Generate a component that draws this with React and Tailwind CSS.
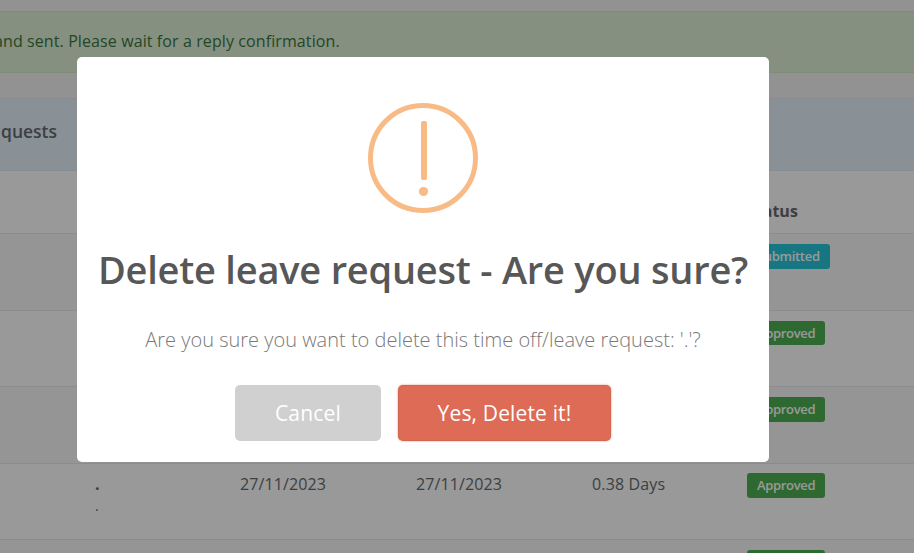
const requests = [
  { status: "Submitted", height: "h-[77px]", bg: "bg-[#f9f9f9]", badge: "mt-[1px] h-[25px] bg-[#26c6da] tracking-[-0.3px]" },
  { status: "Approved", height: "h-[76px]", bg: "bg-white", badge: "mt-[1px] h-[24px] bg-[#4caf50] tracking-[-0.33px]" },
  { status: "Approved", height: "h-[77px]", bg: "bg-[#f9f9f9]", badge: "mt-[1px] h-[25px] bg-[#4caf50] tracking-[-0.33px]" },
  { status: "Approved", height: "h-[76px]", bg: "bg-white", badge: "h-[25px] bg-[#4caf50] tracking-[-0.33px]" },
  { status: "Approved", height: "h-[77px]", bg: "bg-[#f9f9f9]", badge: "mt-[1px] h-[25px] bg-[#4caf50] tracking-[-0.33px]" },
];

function RequestRow({ status, height, bg, badge }) {
  return (
    <div
      className={`grid grid-cols-[95px_145px_176px_176px_155px_1fr] border-t border-[#e7eaec] pt-[9px] ${height} ${bg}`}
    >
      <div />
      <div className="leading-[22px]">
        <div className="font-bold">.</div>
        <div className="text-[14px]">.</div>
      </div>
      <div className="leading-[22px] tracking-[0.1px]">27/11/2023</div>
      <div className="leading-[22px] tracking-[0.1px]">27/11/2023</div>
      <div className="leading-[22px] tracking-[0.15px]">0.38 Days</div>
      <div>
        <span
          className={`flex w-fit items-center rounded-[3px] px-[10px] pb-[1px] text-[13px] leading-[20px] font-semibold text-white ${badge}`}
        >
          {status}
        </span>
      </div>
    </div>
  );
}

function LeavePage() {
  return (
    <div className="h-full overflow-hidden bg-[#f3f3f4] pt-[11px] text-[16px] text-[#676a6c]">
      <div className="flex h-[62px] items-center overflow-hidden border-y border-[#d6e9c6] bg-[#dff0d8] pb-[2px] text-[#3c763d]">
        <span className="-ml-[6px] tracking-[0.1px] whitespace-nowrap">
          and sent. Please wait for a reply confirmation.
        </span>
      </div>
      <div className="mt-[25px] bg-white">
        <div className="flex h-[73px] items-center border-y border-[#dfeaf2] bg-[#e4f0fb] pb-[7px]">
          <h5 className="ml-[1px] text-[17.5px] font-semibold">quests</h5>
        </div>
        <div className="flex h-[62px] items-center pt-[18px] pl-[747px] font-bold">Status</div>
        {requests.map((request, i) => (
          <RequestRow key={i} {...request} />
        ))}
      </div>
    </div>
  );
}

function WarningIcon() {
  return (
    <svg width="110" height="110" viewBox="0 0 110 110" fill="#f8bb86">
      <circle cx="55" cy="55" r="52.5" fill="none" stroke="#f8bb86" strokeWidth="5" />
      <rect x="53" y="18" width="6" height="59" rx="2" />
      <circle cx="55.5" cy="88.5" r="4.6" />
    </svg>
  );
}

function DeleteDialog() {
  return (
    <div
      role="dialog"
      className="mt-[57px] ml-[77px] flex h-[405px] w-[692px] flex-col items-center rounded-[5px] bg-white pt-[46px]"
    >
      <WarningIcon />
      <h2 className="mt-[26px] text-[38px] leading-[60px] font-semibold tracking-[-0.22px] whitespace-nowrap text-[#575757]">
        Delete leave request - Are you sure?
      </h2>
      <p className="mt-[28px] text-[20px] leading-[26px] font-light whitespace-nowrap text-[#797979]">
        Are you sure you want to delete this time off/leave request: '.'?
      </p>
      <div className="mt-[32px] flex gap-[17px] text-[21px] text-white">
        <button className="h-[56px] w-[146px] rounded-[5px] bg-[#d0d0d0] pt-[2px] tracking-[0.2px]">
          Cancel
        </button>
        <button className="h-[56px] w-[213px] rounded-[5px] bg-[#dd6b55] pt-[2px] tracking-[0.15px] shadow-[0_0_2px_rgba(221,107,85,0.8),inset_0_0_0_1px_rgba(0,0,0,0.05)]">
          Yes, Delete it!
        </button>
      </div>
    </div>
  );
}

export default function App() {
  return (
    <div className="relative h-screen w-full overflow-hidden font-['Open_Sans','Noto_Sans',sans-serif]">
      <LeavePage />
      <div className="absolute inset-0 bg-black/40">
        <div className="flex">
          <DeleteDialog />
        </div>
      </div>
    </div>
  );
}
